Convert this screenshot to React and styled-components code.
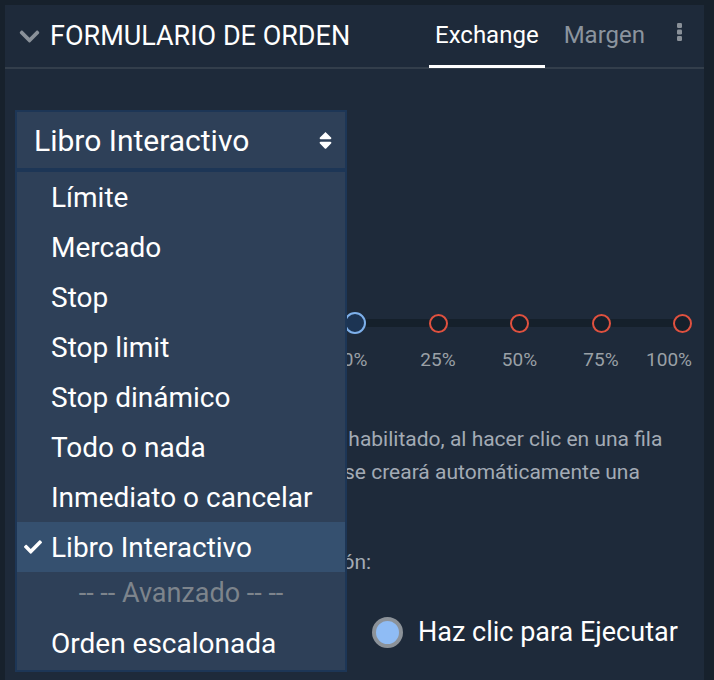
import React from "react";
import styled, { createGlobalStyle } from "styled-components";
import { FaChevronDown, FaCheck, FaSort } from "react-icons/fa";

const GlobalStyle = createGlobalStyle`
  body {
    margin: 0;
    background: #17212c;
    font-family: Roboto, "Liberation Sans", sans-serif;
    overflow: hidden;
  }
`;

const Page = styled.div`
  padding: 5px 10px 0 5px;
  height: 680px;
  box-sizing: border-box;
`;

const Panel = styled.div`
  background: #1e2a3a;
  height: 100%;
`;

const Header = styled.header`
  height: 62px;
  display: flex;
  align-items: stretch;
  border-bottom: 2px solid #333e4b;
  padding-left: 13px;
`;

const Title = styled.h2`
  margin: 0;
  display: flex;
  align-items: center;
  gap: 9px;
  color: #fff;
  font-weight: 400;
  font-size: 27px;
  flex: 1;
  svg {
    color: #8a9199;
    font-size: 23px;
  }
`;

const Tabs = styled.nav`
  display: flex;
  align-items: stretch;
  gap: 13px;
`;

const Tab = styled.div`
  display: flex;
  align-items: center;
  padding: 0 6px 4px;
  font-size: 24px;
  color: ${(p) => (p.$active ? "#fff" : "#8b949e")};
  box-shadow: ${(p) => (p.$active ? "inset 0 -3px 0 #fff" : "none")};
  margin-bottom: -1px;
`;

const Kebab = styled.div`
  display: flex;
  align-items: flex-start;
  padding: 18px 22px 0 26px;
`;

const Body = styled.div`
  position: relative;
  padding: 41px 10px 0;
`;

const Select = styled.div`
  width: 332px;
  height: 60px;
  box-sizing: border-box;
  border: 2px solid #1d3656;
  background: #2e4058;
  display: flex;
  align-items: center;
  justify-content: space-between;
  padding: 0 9px 0 17px;
  color: #fff;
  font-size: 30px;
  svg {
    font-size: 21px;
  }
`;

const Columns = styled.div`
  display: grid;
  grid-template-columns: 329px 348px;
  margin-top: 142px;
`;

const Slider = styled.div`
  grid-column: 2;
`;

const Track = styled.div`
  height: 22px;
  display: flex;
  justify-content: space-between;
  align-items: center;
  background: linear-gradient(#15202b, #15202b) center / calc(100% - 20px) 8px no-repeat;
`;

const Knob = styled.span`
  width: ${(p) => (p.$current ? 22 : 19)}px;
  height: ${(p) => (p.$current ? 22 : 19)}px;
  box-sizing: border-box;
  border-radius: 50%;
  border: 2px solid ${(p) => (p.$current ? "#7eb0ea" : "#e0513f")};
  background: ${(p) => (p.$current ? "#1c3453" : "#15202b")};
`;

const Labels = styled.div`
  display: flex;
  justify-content: space-between;
  margin-top: 14px;
  color: #9aa0a6;
  font-size: 19px;
  span {
    width: 19px;
    display: flex;
    justify-content: center;
    white-space: nowrap;
  }
  span:first-child {
    width: 22px;
  }
  span:last-child {
    justify-content: flex-end;
  }
`;

const Help = styled.p`
  margin: 52px 0 0;
  color: #a3abb5;
  font-size: 21px;
  line-height: 33px;
  white-space: nowrap;
`;

const ModeLabel = styled.p`
  margin: 24px 0 0;
  color: #a3abb5;
  font-size: 21px;
  line-height: 33px;
  white-space: nowrap;
`;

const RadioRow = styled.div`
  display: flex;
  gap: 15px;
  margin-top: 37px;
  padding-left: 357px;
  align-items: center;
  color: #fff;
  font-size: 27px;
  line-height: 32px;
`;

const Radio = styled.span`
  width: 31px;
  height: 31px;
  box-sizing: border-box;
  border-radius: 50%;
  border: 4px solid #8c9299;
  background: #8fbcf5;
`;

const Menu = styled.ul`
  position: absolute;
  top: 101px;
  left: 10px;
  width: 332px;
  margin: 0;
  padding: 0 0 2px;
  list-style: none;
  box-sizing: border-box;
  border: 2px solid #1d3656;
  background: #2e4058;
`;

const Item = styled.li`
  position: relative;
  height: 50px;
  display: flex;
  align-items: center;
  padding-left: 34px;
  font-size: 28px;
  color: #fff;
  background: ${(p) => (p.$selected ? "#35506f" : "transparent")};
  svg {
    position: absolute;
    left: 7px;
    font-size: 18px;
  }
`;

const Separator = styled.li`
  height: 46px;
  box-sizing: border-box;
  padding-bottom: 4px;
  display: flex;
  align-items: center;
  justify-content: center;
  font-size: 27px;
  color: #7d848c;
`;

const options = [
  "Límite",
  "Mercado",
  "Stop",
  "Stop limit",
  "Stop dinámico",
  "Todo o nada",
  "Inmediato o cancelar",
  "Libro Interactivo",
];

function Dots() {
  return (
    <svg width="5" height="18" viewBox="0 0 5 18">
      <rect x="0" y="0" width="5" height="5" rx="1.2" fill="#8a9199" />
      <rect x="0" y="6.5" width="5" height="5" rx="1.2" fill="#8a9199" />
      <rect x="0" y="13" width="5" height="5" rx="1.2" fill="#8a9199" />
    </svg>
  );
}

export default function App() {
  const selected = "Libro Interactivo";
  return (
    <>
      <GlobalStyle />
      <Page>
        <Panel>
          <Header>
            <Title>
              <FaChevronDown />
              FORMULARIO DE ORDEN
            </Title>
            <Tabs>
              <Tab $active>Exchange</Tab>
              <Tab>Margen</Tab>
            </Tabs>
            <Kebab>
              <Dots />
            </Kebab>
          </Header>

          <Body>
            <Select>
              <span>{selected}</span>
              <FaSort />
            </Select>

            <Columns>
              <Slider>
                <Track>
                  <Knob $current />
                  <Knob />
                  <Knob />
                  <Knob />
                  <Knob />
                </Track>
                <Labels>
                  <span>0%</span>
                  <span>25%</span>
                  <span>50%</span>
                  <span>75%</span>
                  <span>100%</span>
                </Labels>
              </Slider>
            </Columns>

            <Help>
              Si la función "Libro Interactivo" está habilitado, al hacer clic en una fila
              <br />
              del Libro de Órdenes, entonces, así se creará automáticamente una
              <br />
              orden.
            </Help>
            <ModeLabel>Selecciona aquí el modo de ejecución:</ModeLabel>

            <RadioRow>
              <Radio />
              Haz clic para Ejecutar
            </RadioRow>

            {/* open dropdown of the order type select */}
            <Menu>
              {options.map((o) => (
                <Item key={o} $selected={o === selected}>
                  {o === selected && <FaCheck />}
                  {o}
                </Item>
              ))}
              <Separator>-- -- Avanzado -- --</Separator>
              <Item>Orden escalonada</Item>
            </Menu>
          </Body>
        </Panel>
      </Page>
    </>
  );
}
